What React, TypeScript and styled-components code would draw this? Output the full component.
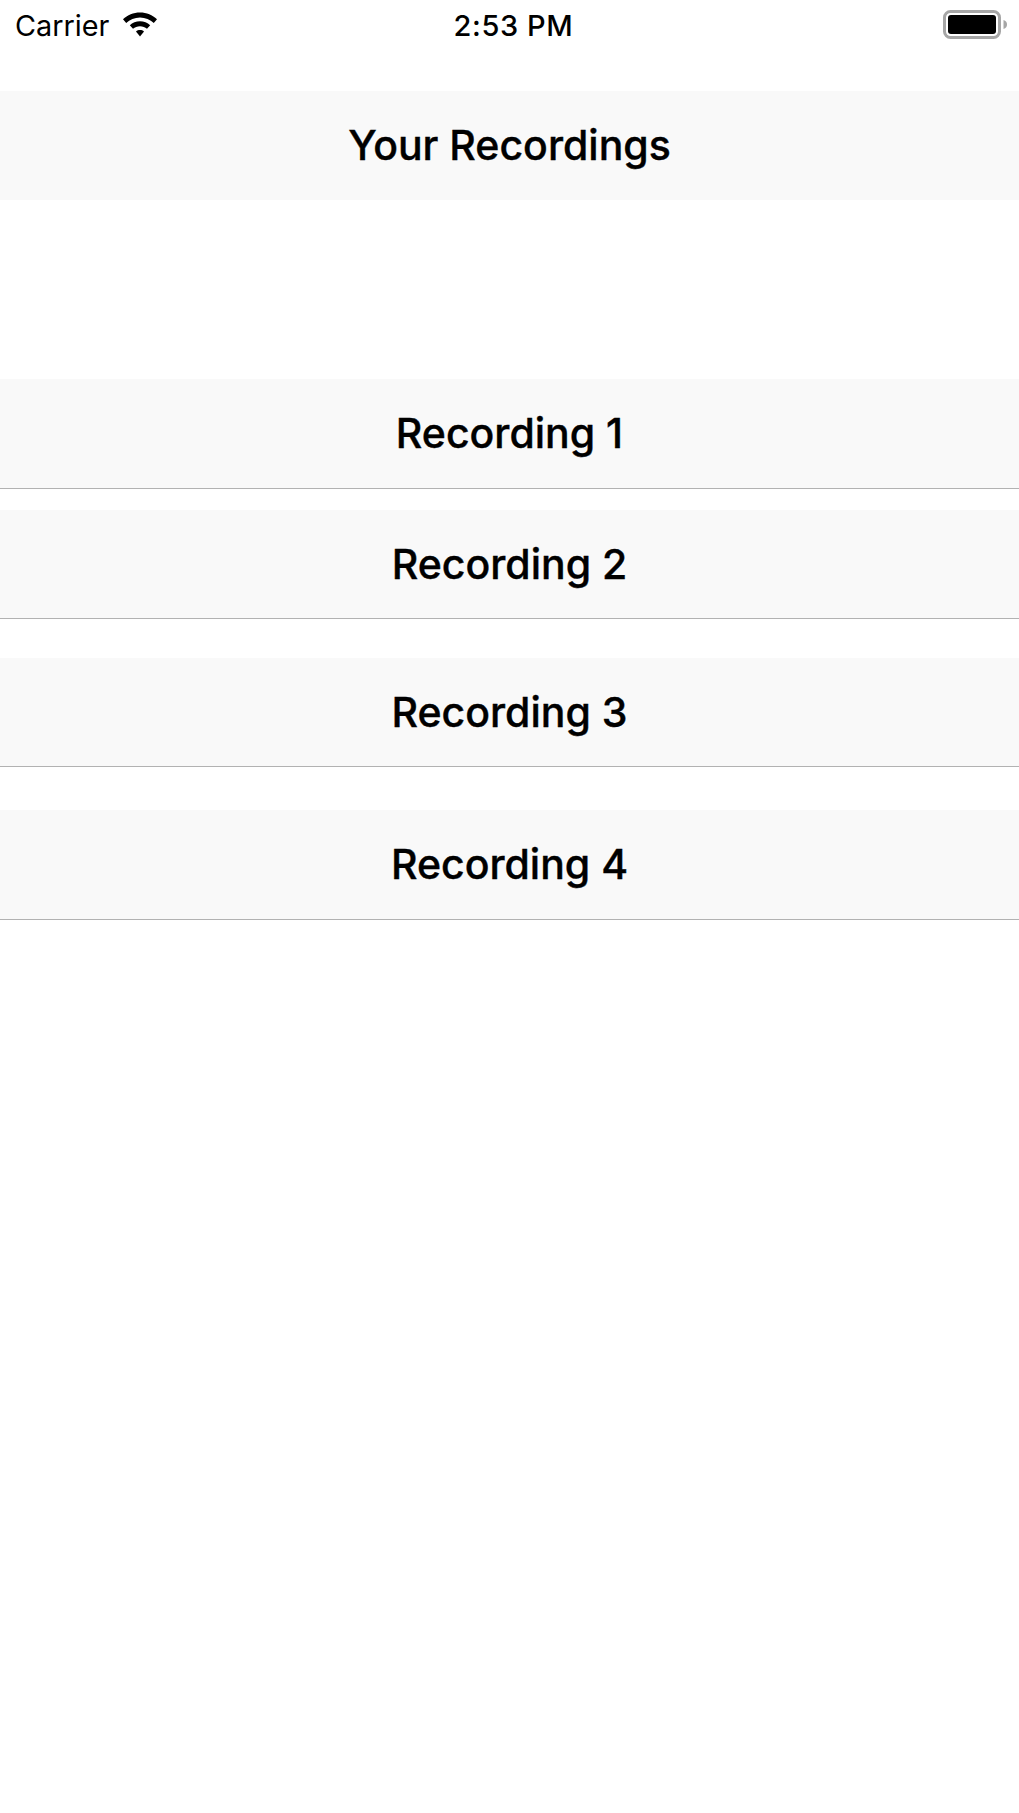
import React from "react";
import styled, { createGlobalStyle } from "styled-components";

const Global = createGlobalStyle`
  html, body { margin: 0; padding: 0; background: #ffffff; }
  body { font-family: Inter, "Liberation Sans", sans-serif; color: #000; }
`;

const Screen = styled.div`
  width: 1019px;
  height: 1813px;
  display: flex;
  flex-direction: column;
  background: #ffffff;
  overflow: hidden;
`;

const StatusBar = styled.div`
  height: 91px;
  flex: none;
  display: grid;
  grid-template-columns: 1fr auto 1fr;
  align-items: start;
  padding: 0 10px 0 15px;
  box-sizing: border-box;
`;

const StatusLeft = styled.div`
  display: flex;
  align-items: center;
  gap: 13px;
  height: 50px;
`;

const Carrier = styled.span`
  font-size: 28.8px;
  font-weight: 400;
`;

const Time = styled.span`
  font-size: 29px;
  font-weight: 500;
  letter-spacing: 0.6px;
  line-height: 52px;
  margin-left: 3px;
`;

const StatusRight = styled.div`
  display: flex;
  justify-content: flex-end;
  align-items: center;
  height: 50px;
`;

const Header = styled.div`
  height: 109px;
  flex: none;
  box-sizing: border-box;
  padding-bottom: 2px;
  display: flex;
  align-items: center;
  justify-content: center;
  background: #f9f9f9;
  font-size: 41px;
  font-weight: 500;
  -webkit-text-stroke: 0.4px #000;
  margin-bottom: 179px;
`;

const Row = styled.div<{ $height: number; $gap: number }>`
  height: ${(p) => p.$height}px;
  flex: none;
  box-sizing: border-box;
  padding-bottom: 1px;
  display: flex;
  align-items: center;
  justify-content: center;
  background: #f9f9f9;
  border-bottom: 1px solid #b2b2b2;
  font-size: 41px;
  font-weight: 500;
  -webkit-text-stroke: 0.4px #000;
  margin-bottom: ${(p) => p.$gap}px;
`;

const Wifi = () => (
  <svg width="36" height="26" viewBox="0 0 36 26" aria-hidden="true">
    <path d="M18 0.5C11.4 0.5 5.5 3.1 1 7.3L4.2 10.9C7.8 7.5 12.7 5.4 18 5.4C23.3 5.4 28.2 7.5 31.8 10.9L35 7.3C30.5 3.1 24.6 0.5 18 0.5Z" />
    <path d="M18 9.3C14.1 9.3 10.5 10.8 7.8 13.3L11 16.8C12.9 15.2 15.3 14.2 18 14.2C20.7 14.2 23.1 15.2 25 16.8L28.2 13.3C25.5 10.8 21.9 9.3 18 9.3Z" />
    <path d="M18 18C16.5 18 15.1 18.5 14 19.4L18 24.5L22 19.4C20.9 18.5 19.5 18 18 18Z" />
  </svg>
);

const Battery = () => (
  <svg width="66" height="30" viewBox="0 0 66 30" aria-hidden="true">
    <rect x="1.5" y="1.5" width="55" height="26" rx="6" fill="none" stroke="#a6a6a6" strokeWidth="3" />
    <rect x="5" y="5" width="48" height="19" rx="3" fill="#000" />
    <path d="M60.5 10C63 10.5 64 12.5 64 14.5C64 16.5 63 18.5 60.5 19Z" fill="#a6a6a6" />
  </svg>
);

const recordings = [
  { name: "Recording 1", height: 110, gap: 21 },
  { name: "Recording 2", height: 109, gap: 39 },
  { name: "Recording 3", height: 109, gap: 43 },
  { name: "Recording 4", height: 110, gap: 0 },
];

export default function App() {
  return (
    <Screen>
      <Global />
      <StatusBar>
        <StatusLeft>
          <Carrier>Carrier</Carrier>
          <Wifi />
        </StatusLeft>
        <Time>2:53 PM</Time>
        <StatusRight>
          <Battery />
        </StatusRight>
      </StatusBar>
      <Header>Your Recordings</Header>
      {recordings.map((r) => (
        <Row key={r.name} $height={r.height} $gap={r.gap}>
          {r.name}
        </Row>
      ))}
    </Screen>
  );
}
